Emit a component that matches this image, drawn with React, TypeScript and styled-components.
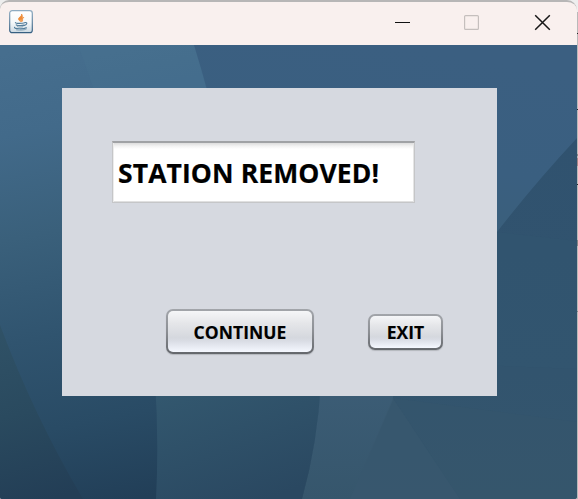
import React from 'react';
import styled, { createGlobalStyle } from 'styled-components';

const GlobalStyle = createGlobalStyle`
  body { margin: 0; background: #e9e8e8; overflow: hidden; }
`;

const Desktop = styled.div`
  display: grid;
  grid-template-columns: 577px 1px;
  width: 578px;
  height: 499px;
  background: linear-gradient(
    #eeeeee 0 12px, #b9b9b9 12px 33px, #262626 33px 34px, #b9b9b9 34px 109px,
    #262626 109px 110px, #b9b9b9 110px 154px, #858585 154px 156px, #b9b9b9 156px 158px,
    #a48787 158px 166px, #b9b9b9 166px 184px, #262626 184px 185px, #b9b9b9 185px 240px,
    #858585 240px 246px, #b9b9b9 246px 311px, #858585 311px 312px, #b9b9b9 312px
  );
  font-family: "Open Sans", "Noto Sans", sans-serif;
`;

const Window = styled.main`
  box-sizing: border-box;
  display: flex;
  flex-direction: column;
  height: 499px;
  border-top: 2px solid #b7b6b6;
  border-radius: 9px 10px 3px 2px;
  overflow: hidden;
  background: #f9f0ee;
`;

const TitleBar = styled.header`
  display: flex;
  align-items: flex-start;
  justify-content: space-between;
  height: 43px;
  flex: none;
  padding-left: 9px;
`;

const JavaIcon = styled.svg`
  width: 24px;
  height: 24px;
  margin-top: 8px;
`;

const Controls = styled.div`
  display: flex;
  height: 42px;
`;

const ControlButton = styled.button`
  width: 70px;
  height: 42px;
  padding: 0;
  border: 0;
  background: transparent;
  svg { display: block; }
`;

const Content = styled.section`
  display: grid;
  height: 454px;
  grid-template: 454px / 577px;
`;

const Backdrop = styled.svg`
  grid-area: 1 / 1;
  width: 577px;
  height: 454px;
`;

const Panel = styled.div`
  grid-area: 1 / 1;
  z-index: 1;
  box-sizing: border-box;
  display: flex;
  flex-direction: column;
  justify-content: space-between;
  width: 435px;
  height: 308px;
  margin: 43px 0 0 62px;
  padding: 53px 54px 42px 50px;
  background: #d6d9e0;
`;

const Message = styled.input`
  box-sizing: border-box;
  width: 303px;
  height: 62px;
  padding: 1px 0 0 5px;
  border: 1px solid #c5c6c8;
  border-width: 2px 1px 1px;
  border-top-color: #a0a2a5;
  border-radius: 0;
  outline: none;
  color: #000;
  background: linear-gradient(#dcdcdc, #f2f2f2 3px, #fff 6px);
  box-shadow: inset 1px 0 #ececec, inset -1px 0 #e5e5e5, inset 0 -1px #e0e0e0;
  font: 700 26.5px "Open Sans", sans-serif;
  letter-spacing: 0.1px;
  -webkit-text-stroke: 0.2px #000;
`;

const Actions = styled.div`
  display: flex;
  align-items: center;
  justify-content: space-between;
  padding-left: 54px;
`;

const NimbusButton = styled.button<{ $width: number; $height: number }>`
  box-sizing: border-box;
  width: ${(p) => p.$width}px;
  height: ${(p) => p.$height}px;
  padding: 0;
  border: 2px solid transparent;
  border-radius: 7px;
  color: #000;
  background:
    linear-gradient(#f5f6f8, #e5e6e9 30%, #d5d8de 65%, #d9dce4 73%, #f5f8ff) padding-box,
    linear-gradient(#a2a5aa, #8c8f94 50%, #64676c) border-box;
  box-shadow: 0 1px 1px #b4b7bd;
  font: 700 17.5px/22px "Open Sans", sans-serif;
  letter-spacing: 0.05px;
  -webkit-text-stroke: 0.15px #000;
`;

function App() {
  return (
    <>
      <GlobalStyle />
      <Desktop>
        <Window>
          <TitleBar>
            <JavaIcon viewBox="0 0 24 24" fill="none">
              <defs>
                <linearGradient id="tile" x2="0" y2="1">
                  <stop stopColor="#fff" /><stop offset=".55" stopColor="#f5f8fa" /><stop offset="1" stopColor="#cbd9e2" />
                </linearGradient>
                <linearGradient id="rim" x2="0" y2="1">
                  <stop stopColor="#8eabc1" /><stop offset="1" stopColor="#365f81" />
                </linearGradient>
              </defs>
              <rect x=".7" y=".7" width="22.6" height="22" rx="2.5" fill="url(#tile)" stroke="url(#rim)" strokeWidth="1.2" />
              <path d="M12.6 4c.6 2.5-3.8 3.3-3 5.6.3.8 1.2 1.3 1.9 2-1-2.4 3.7-3.5 1.1-7.6ZM14.8 7.3c-4 1.5-2 2.4-2.1 4.5 2-1.6-.4-2.4 2.1-4.5Z" fill="#ee8b38" stroke="#ee8b38" strokeWidth=".8" />
              <path d="M6.4 12.6c0 1.2 7.2 1 9.3.1M7.3 14.9c1.4 1 6 .9 7.7.2M15.8 12.6c3.1-.7 2.3 2.2-.3 2.7M5.6 17.3c-1.1 1.8 9.2 2 11.6.4" stroke="#557f9c" strokeWidth="1.2" strokeLinecap="round" />
              <path d="M8.4 16.7c1.3.7 4.2.6 5.6.1M7.5 19.9c4 .6 8.4.3 10.1-1" stroke="#7799ae" strokeWidth=".8" strokeLinecap="round" />
            </JavaIcon>
            <Controls>
              <ControlButton aria-label="Minimize">
                <svg width="70" height="42" viewBox="0 0 70 42"><path d="M28 20.5h15" stroke="#111" /></svg>
              </ControlButton>
              <ControlButton aria-label="Maximize" disabled>
                <svg width="70" height="42" viewBox="0 0 70 42" fill="none"><rect x="27.6" y="13.6" width="13.8" height="13.8" rx="1" stroke="#c5bfbd" strokeWidth="1.2" /></svg>
              </ControlButton>
              <ControlButton aria-label="Close">
                <svg width="70" height="42" viewBox="0 0 70 42"><path d="M28.2 13.2l14.6 14.6M42.8 13.2L28.2 27.8" stroke="#171717" strokeWidth="1.5" /></svg>
              </ControlButton>
            </Controls>
          </TitleBar>
          <Content>
            <Backdrop viewBox="0 45 577 454" preserveAspectRatio="none">
              <defs>
                <linearGradient id="left" gradientUnits="userSpaceOnUse" x1="40" y1="45" x2="130" y2="499">
                  <stop stopColor="#466e8e" /><stop offset=".18" stopColor="#426a8a" /><stop offset=".4" stopColor="#3a607b" /><stop offset=".62" stopColor="#30546f" /><stop offset=".82" stopColor="#294b65" /><stop offset="1" stopColor="#223f58" />
                </linearGradient>
                <linearGradient id="corner" gradientUnits="userSpaceOnUse" x1="0" y1="325" x2="50" y2="499">
                  <stop stopColor="#305267" /><stop offset=".5" stopColor="#2a4a5f" /><stop offset="1" stopColor="#233e56" />
                </linearGradient>
                <linearGradient id="middle" gradientUnits="userSpaceOnUse" x1="190" y1="380" x2="235" y2="510">
                  <stop stopColor="#33586f" /><stop offset="1" stopColor="#2a4861" />
                </linearGradient>
                <linearGradient id="upper" gradientUnits="userSpaceOnUse" x1="400" y1="45" x2="365" y2="240">
                  <stop stopColor="#3b5f81" /><stop offset=".55" stopColor="#3a5f80" /><stop offset="1" stopColor="#3a5f79" />
                </linearGradient>
                <linearGradient id="lower" x2="0" y2="1">
                  <stop stopColor="#30526f" /><stop offset=".65" stopColor="#32546e" /><stop offset="1" stopColor="#35566d" />
                </linearGradient>
                <linearGradient id="blade" x2="0" y2="1">
                  <stop stopColor="#3c5d76" /><stop offset="1" stopColor="#36566c" />
                </linearGradient>
              </defs>
              <path d="M0 45h577v454H0z" fill="url(#left)" />
              <path d="M78 45h116l20 70H103z" fill="#4a7393" opacity=".3" />
              <path d="M194 45h383v195H240Q222 135 194 45Z" fill="url(#upper)" />
              <path d="M577 138Q535 183 497 232L320 400V499H577Z" fill="url(#lower)" />
              <path d="M497 232l80 9v128L350 360Z" fill="#32556f" opacity=".5" />
              <path d="M0 325Q34 416 83 499H0Z" fill="url(#corner)" />
              <path d="M155 380Q159 440 156 499H302Q319 440 321 380Z" fill="url(#middle)" />
              <path d="M321 380Q318 442 302 499H350L393 400V380Z" fill="url(#blade)" />
              <path d="M393 398L350 499H460Z" fill="#3a5a70" opacity=".55" />
              <path d="M393 398l184 24v77H460Z" fill="#36566c" opacity=".5" />
            </Backdrop>
            <Panel>
              <Message readOnly value="STATION REMOVED!" aria-label="Message" />
              <Actions>
                <NimbusButton $width={148} $height={45}>CONTINUE</NimbusButton>
                <NimbusButton $width={75} $height={36}>EXIT</NimbusButton>
              </Actions>
            </Panel>
          </Content>
        </Window>
      </Desktop>
    </>
  );
}

export default App;
